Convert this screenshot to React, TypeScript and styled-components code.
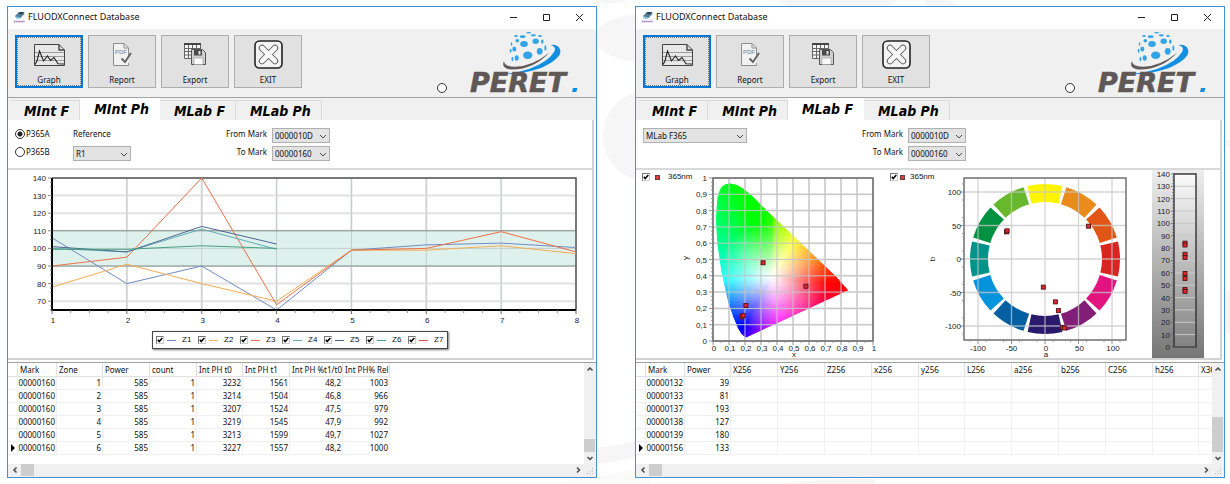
import React, { useId, useState } from "react";
import styled, { createGlobalStyle } from "styled-components";

const ui = `"Noto Sans", "Open Sans", sans-serif`;
const plotFont = `"Liberation Sans", Arial, sans-serif`;

const GlobalStyle = createGlobalStyle`
  *, *::before, *::after { box-sizing: border-box; }
  body {
    margin: 0;
    background: #fff;
    color: #111;
    font-family: ${ui};
    font-size: 8px;
    line-height: 12px;
  }
  button, select, input { font: inherit; color: inherit; margin: 0; }
  svg { display: block; }
`;

/* ---------- Page ---------- */

const Page = styled.main`
  position: relative;
  display: flex;
  align-items: flex-start;
  gap: 38px;
  min-height: 100vh;
  padding: 6px 5px 6px 7px;
  overflow: hidden;
`;

const Backdrop = styled.svg`
  position: absolute;
  inset: 0;
`;

const Frame = styled.section`
  position: relative;
  flex: 1;
  min-width: 0;
  border: 1px solid #3f92d6;
  background: #fff;
`;

/* ---------- Title bar ---------- */

const TitleBar = styled.header`
  display: flex;
  align-items: center;
  height: 22px;
  padding: 0 0 2px 6px;
  gap: 3px;
`;

const Title = styled.h1`
  flex: 1;
  margin: 0;
  font-size: 9px;
  font-weight: 400;
`;

const CaptionButtons = styled.div`
  display: flex;
`;

const CaptionButton = styled.button`
  display: grid;
  place-items: center;
  width: 33px;
  height: 20px;
  padding: 0;
  border: 0;
  background: none;
`;

/* ---------- Toolbar ---------- */

const Toolbar = styled.div`
  display: flex;
  height: 69px;
  padding: 6px 13px 0 7px;
  gap: 5px;
  background: #f0f0f0;
  border-bottom: 1px solid #a3a3a3;
`;

const ToolButton = styled.button<{ $focused?: boolean }>`
  display: flex;
  flex-direction: column;
  align-items: center;
  width: 68px;
  height: 53px;
  padding: 0;
  border: ${(p) => (p.$focused ? "2px solid #0078d7" : "1px solid #adadad")};
  outline: ${(p) => (p.$focused ? "1px dotted #777" : "none")};
  outline-offset: -3px;
  background: #e1e1e1;
`;

const ToolIcon = styled.span<{ $focused?: boolean }>`
  display: grid;
  place-items: center;
  height: ${(p) => (p.$focused ? "37px" : "38px")};
  padding-bottom: 2px;
`;

const Brand = styled.div`
  display: flex;
  align-items: flex-end;
  gap: 18px;
  height: 58px;
  margin-left: auto;
`;

/* ---------- Tabs ---------- */

const TabStrip = styled.div`
  display: flex;
  align-items: flex-end;
  height: 22px;
  padding-left: 2px;
  background: #f0f0f0;
`;

const Tab = styled.button<{ $active: boolean }>`
  height: ${(p) => (p.$active ? "22px" : "20px")};
  padding: 0 10px ${(p) => (p.$active ? "2px" : "0")} 14px;
  border: 1px solid ${(p) => (p.$active ? "#fff" : "#dcdcdc")};
  border-left-width: 0;
  border-bottom-width: 0;
  background: ${(p) => (p.$active ? "#fff" : "#f0f0f0")};
  color: #000;
  font: italic 700 14px/18px "DejaVu Sans Condensed", "DejaVu Sans", sans-serif;
  white-space: nowrap;
`;

const Body = styled.div`
  margin-right: 2px;
  border: solid #d2d2d2;
  border-width: 0 2px 2px 0;
`;

/* ---------- Filter controls ---------- */

const Filters = styled.form`
  display: flex;
  height: 50px;
  padding: 8px 7px 0;
  border-bottom: 2px solid #d9d9d9;
`;

const Stack = styled.div<{ $width: number }>`
  display: grid;
  grid-template-rows: 15px 15px;
  row-gap: 3px;
  width: ${(p) => p.$width}px;
`;

const RadioLabel = styled.label`
  display: flex;
  align-items: center;
  gap: 1px;
  height: 12px;
`;

const Radio = styled.input.attrs({ type: "radio" })`
  appearance: none;
  width: 10px;
  height: 10px;
  border: 1px solid #333;
  border-radius: 50%;
  background: #fff;
  &:checked {
    background: radial-gradient(circle, #222 0 2px, #fff 3px);
  }
`;

const FieldLabel = styled.label`
  line-height: 11px;
  white-space: nowrap;
`;

const MarkGrid = styled.div<{ $offset: number }>`
  display: grid;
  grid-template: 15px 15px / 46px 58px;
  gap: 3px 5px;
  margin-left: ${(p) => p.$offset}px;
  ${FieldLabel} { text-align: right; }
`;

const SelectBox = styled.span`
  display: grid;
  align-items: center;
  height: 15px;
  > * { grid-area: 1 / 1; }
  > svg { justify-self: end; margin-right: 3px; pointer-events: none; }
`;

const NativeSelect = styled.select`
  appearance: none;
  width: 100%;
  height: 15px;
  padding: 0 0 0 2px;
  border: 1px solid #b0b0b0;
  border-radius: 0;
  background: #e3e3e3;
  line-height: 12px;
`;

/* ---------- Charts ---------- */

const Charts = styled.div`
  display: flex;
  align-items: flex-start;
  padding-right: 16px;
`;

const LineChartBox = styled.figure`
  display: flex;
  flex-direction: column;
  align-items: center;
  margin: 0;
  padding-bottom: 9px;
`;

const Plot = styled.svg`
  width: 100%;
  height: auto;
  font-family: ${plotFont};
  font-size: 8px;
  fill: #222;
`;

const Legend = styled.figcaption`
  display: flex;
  height: 18px;
  border: 1px solid #444;
  background: #fff;
  box-shadow: 1px 1px 2px #777;
  font-family: ${plotFont};
`;

const LegendItem = styled.label`
  display: flex;
  align-items: center;
  width: 42px;
  padding-left: 3px;
`;

const Dash = styled.i<{ $color: string }>`
  width: 9px;
  height: 1px;
  margin: 0 6px 0 3px;
  background: ${(p) => p.$color};
`;

const CheckBoxFrame = styled.span`
  display: grid;
  place-items: center;
  > * { grid-area: 1 / 1; }
  > svg { pointer-events: none; }
  > input:not(:checked) + svg { visibility: hidden; }
`;

const CheckInput = styled.input.attrs({ type: "checkbox" })`
  appearance: none;
  width: 8px;
  height: 8px;
  border: 1px solid;
  border-color: #777 #ccc #ccc #777;
  background: #fff;
`;

const Panel = styled.div<{ $grow: number }>`
  display: grid;
  flex: ${(p) => p.$grow} 1 0;
  min-width: 0;
  > * { grid-area: 1 / 1; }
`;

const PointLegend = styled.label<{ $indent: number; $gap: number }>`
  display: flex;
  align-items: center;
  align-self: start;
  justify-self: start;
  gap: ${(p) => p.$gap}px;
  padding: 1px 0 0 ${(p) => p.$indent}px;
  font-family: ${plotFont};
`;

const PointSwatch = styled.i`
  width: 5px;
  height: 5px;
  margin-right: 3px;
  border: 1px solid #6b3a3a;
  background: #e23b3b;
`;

/* ---------- Data grid ---------- */

const GridFrame = styled.div`
  display: grid;
  grid-template: 101px 12px / 1fr 11px;
  margin-top: 2px;
  padding: 0 1px 1px 0;
  border-top: 1px solid #a0a0a0;
  background: #f0f0f0;
`;

const GridView = styled.div`
  overflow: hidden;
  background: #fff;
`;

const Table = styled.table`
  table-layout: fixed;
  width: 0;
  border-collapse: separate;
  border-spacing: 0;
`;

const HeadCell = styled.th`
  height: 14px;
  padding: 0 0 0 2px;
  border-right: 1px solid #e2e2e2;
  border-bottom: 1px solid #e2e2e2;
  font-weight: 400;
  text-align: left;
  line-height: 12px;
  white-space: nowrap;
`;

const Cell = styled.td`
  height: 13px;
  padding: 0 1px 0 0;
  border-right: 1px solid #f0f0f0;
  border-bottom: 1px solid #f0f0f0;
  text-align: right;
  line-height: 12px;
`;

const Pointer = styled.i`
  display: block;
  width: 0;
  margin-left: 3px;
  border: solid transparent;
  border-width: 4px 0 4px 4px;
  border-left-color: #000;
`;

const VScroll = styled.div`
  display: flex;
  flex-direction: column;
`;

const HScroll = styled.div`
  display: flex;
`;

const Track = styled.span`
  flex: 1;
`;

const Thumb = styled.span<{ $length: number; $across?: boolean }>`
  width: ${(p) => (p.$across ? `${p.$length}px` : "auto")};
  height: ${(p) => (p.$across ? "auto" : `${p.$length}px`)};
  background: #cdcdcd;
`;

const ScrollButton = styled.button`
  display: grid;
  place-items: center;
  min-width: 11px;
  width: 13px;
  height: 12px;
  padding: 0;
  border: 0;
  background: none;
  ${VScroll} & { width: 11px; }
`;

const Grip = styled.svg`
  align-self: end;
  justify-self: end;
`;

/* ---------- Small drawings ---------- */

const Chevron = ({ dir, bold }: { dir: "up" | "down" | "left" | "right"; bold?: boolean }) => {
  const d = bold
    ? { up: "M1.500 5.500L4 3l2.500 2.500", down: "M1.500 3L4 5.500 6.500 3", left: "M5.500 1.500L3 4l2.500 2.500", right: "M3 1.500L5.500 4 3 6.500" }[dir]
    : { up: "M1 6l3-3 3 3", down: "M1 3l3 3 3-3", left: "M6 1L3 4l3 3", right: "M3 1l3 3-3 3" }[dir];
  return (
    <svg width="8" height="8" viewBox="0 0 8 8" fill="none" stroke="#4a4a4a" strokeWidth={bold ? 1.5 : 1} aria-hidden="true">
      <path d={d} />
    </svg>
  );
};

const AppIcon = () => (
  <svg width="11" height="12" viewBox="0 0 11 12" aria-hidden="true">
    <path d="M1 5l4-4 5 0 .5 2-4 4-4 .5z" fill="#5b7f99" />
    <path d="M4 2l3-1 3 .5-3 2z" fill="#263d52" />
    <path d="M1 5.500l4 .5 1 1.500-3 .5z" fill="#7fd0ec" />
    <path d="M0 10.500h11" stroke="#a06bb8" strokeWidth="1.500" strokeDasharray="1.500 .6" />
  </svg>
);

const GraphIcon = () => (
  <svg width="31" height="22" viewBox="0 0 31 22" fill="none" stroke="#444" aria-hidden="true">
    <path d="M.5.500H25l5.500 5.500v15.500H.5z" fill="#e8e8e8" />
    <path d="M25 .5V6h5.500" strokeWidth="1.400" />
    <path d="M1 8.500h29M1 12.500h29M1 16.500h29" stroke="#8a8a8a" strokeWidth=".8" />
    <path d="M1 20.500L3 17 5.500 7l4 10 4-5 3 4.500 3.500-3 4 6.200 6 .3" stroke="#222" strokeWidth="1.100" />
  </svg>
);

const ReportIcon = () => (
  <svg width="19" height="23" viewBox="0 0 19 23" fill="none" stroke="#8d8d8d" aria-hidden="true">
    <path d="M.5.500H11l4.500 4.500v17.500H.5z" fill="#f2f2f2" stroke="none" />
    <path d="M15.500 12V5L11 .5H.5v22h15V20M11 .5V5h4.500" />
    <text x="2" y="11" fontSize="6" fontFamily={plotFont} fill="#777" stroke="none">PDF</text>
    <path d="M8.500 15.500l3.500 3.500 6-9" stroke="#666" strokeWidth="2" />
  </svg>
);

const ExportIcon = () => (
  <svg width="22" height="22" viewBox="0 0 22 22" aria-hidden="true">
    <path d="M.5.500h16v15H.5z" fill="#f4f4f4" stroke="#666" />
    <path d="M0 0h17v2H0z" fill="#444" />
    <path d="M4.500 2v13.500M8.500 2v13.500M12.500 2v13.500M.5 5.500h16M.5 8.500h16M.5 12h16" stroke="#666" />
    <path d="M7.500 6.500h11l3 3v12h-14z" fill="#cfcfcf" stroke="#555" />
    <path d="M10 7h8v5.500h-8z" fill="#4a4a4a" />
    <path d="M14.500 8h2v3.500h-2z" fill="#e1e1e1" />
    <path d="M10 15h9v6.500h-9z" fill="#fafafa" stroke="#999" strokeWidth=".6" />
  </svg>
);

const ExitIcon = () => (
  <svg width="29" height="29" viewBox="0 0 29 29" aria-hidden="true">
    <rect x="1" y="1" width="27" height="27" rx="4.500" fill="#f3f3f3" stroke="#222" strokeWidth="1.600" />
    <path d="M8 8l13 13M21 8L8 21" stroke="#555" strokeWidth="6.400" strokeLinecap="round" />
    <path d="M8 8l13 13M21 8L8 21" stroke="#f8f8f8" strokeWidth="4.600" strokeLinecap="round" />
  </svg>
);

const globeDots = [
  [59, 13, 3.8, 3], [70.7, 10.3, 3.2, 2.7], [62.7, 24.3, 4.6, 3.8], [74.7, 20.3, 2.9, 3.4],
  [49.3, 18, 2, 2.6], [51.7, 27, 2, 2.8], [57.7, 5.7, 3, 1.4], [68.3, 4.3, 2.6, 1.1],
  [63.7, 1.7, 2.6, 0.8], [52.3, 9.7, 1.8, 1.8], [77.3, 10.6, 1.2, 2.2], [80.4, 17, 1, 2.8],
  [47.4, 28, 0.9, 2.2], [45.6, 19.7, 0.9, 2], [75, 5, 1.8, 0.9], [51, 5, 1.8, 0.9], [46.5, 13, 0.8, 1.8],
];

const LogoArt = styled.svg`
  overflow: visible;
`;

const Logo = () => (
  <LogoArt width="118" height="62" viewBox="0 0 118 62" role="img" aria-label="Peret">
    {globeDots.map(([cx, cy, rx, ry], i) => (
      <ellipse key={i} cx={cx} cy={cy} rx={rx} ry={ry} fill="#31a3e6" />
    ))}
    <path d="M39 30Q35.500 37.500 46 38.500 68 39 84.500 21.500 67 35.500 50 35.800 39 35.500 39 30z" fill="#625b5a" />
    <path d="M39 43Q55 44 76 37 98 27 95 18.500 93 13 85.500 14 92 16 89 21 83 31 64 38 52 42 39 43z" fill="#128fe0" />
    <text
      x="5"
      y="61"
      fontFamily={`"DejaVu Sans", sans-serif`}
      fontSize="27"
      fontWeight="700"
      fontStyle="italic"
      fill="#5f5856"
      stroke="#5f5856"
      strokeWidth=".6"
    >
      PERET
    </text>
    <path d="M108 57h4.500l-1.200 4H107z" fill="#128fe0" />
  </LogoArt>
);

/* ---------- Shared controls ---------- */

const CheckBox = ({ label }: { label?: string }) => {
  const [on, setOn] = useState(true);
  return (
    <CheckBoxFrame>
      <CheckInput checked={on} onChange={() => setOn(!on)} aria-label={label} />
      <svg width="6" height="6" viewBox="0 0 6 6" fill="none" stroke="#000" strokeWidth="1.500" aria-hidden="true">
        <path d="M.8 2.800l1.400 1.700L5.300 1" />
      </svg>
    </CheckBoxFrame>
  );
};

const Select = ({ id, value, label }: { id: string; value: string; label?: string }) => (
  <SelectBox>
    <NativeSelect id={id} defaultValue={value} aria-label={label}>
      <option>{value}</option>
    </NativeSelect>
    <Chevron dir="down" />
  </SelectBox>
);

const MarkRange = ({ offset }: { offset: number }) => {
  const id = useId();
  return (
    <MarkGrid $offset={offset}>
      <FieldLabel htmlFor={`${id}from`}>From Mark</FieldLabel>
      <Select id={`${id}from`} value="0000010D" />
      <FieldLabel htmlFor={`${id}to`}>To Mark</FieldLabel>
      <Select id={`${id}to`} value="00000160" />
    </MarkGrid>
  );
};

/* ---------- Line chart ---------- */

const series: { name: string; color: string; values: number[] }[] = [
  { name: "Z1", color: "#6f8cc4", values: [106, 80, 90, 65, 99, 102, 103, 100.5] },
  { name: "Z2", color: "#f3ad52", values: [78, 91, 80, 70, 99, 99, 101.5, 97] },
  { name: "Z3", color: "#ee7048", values: [90, 95, 140, 68, 99, 100, 109.5, 98] },
  { name: "Z4", color: "#62abb5", values: [100, 98, 111, 99.5] },
  { name: "Z5", color: "#4f6690", values: [101, 98, 112.5, 102.5] },
  { name: "Z6", color: "#45a07f", values: [99.5, 99.5, 101.5, 100] },
  { name: "Z7", color: "#e05050", values: [] },
];

const LineChart = () => {
  const left = 44;
  const right = 568;
  const top = 8;
  const bottom = 140;
  const sx = (i: number) => left + ((i - 1) * (right - left)) / 7;
  const sy = (v: number) => bottom - ((v - 65) * (bottom - top)) / 75;
  const levels = [70, 80, 90, 100, 110, 120, 130, 140];
  const steps = [1, 2, 3, 4, 5, 6, 7, 8];
  return (
    <LineChartBox>
      <Plot viewBox="0 0 584 161" role="img" aria-label="Zones by measurement">
        <g stroke="#e2e2e2" strokeWidth="2">
          {levels.map((v) => <path key={v} d={`M${left} ${sy(v)}H${right}`} />)}
          {steps.map((i) => <path key={i} d={`M${sx(i)} ${top}V${bottom}`} />)}
        </g>
        <rect x={left} y={sy(110)} width={right - left} height={sy(90) - sy(110)} fill="#dff1ec" />
        <g stroke="#c4cfcc">
          {steps.slice(1, 7).map((i) => <path key={i} d={`M${sx(i)} ${top}V${bottom}`} />)}
          <path d={`M${left} ${sy(100)}H${right}`} />
        </g>
        <path d={`M${left} ${sy(110)}H${right}M${left} ${sy(90)}H${right}`} stroke="#7f8a88" />
        <path d={`M${left} ${top}H${right}V${bottom}`} fill="none" stroke="#555" strokeWidth="1.500" />
        {series.map((s) => (
          <polyline
            key={s.name}
            points={s.values.map((v, i) => `${sx(i + 1)},${sy(v)}`).join(" ")}
            fill="none"
            stroke={s.color}
          />
        ))}
        <path d={`M${left} ${top}V${bottom}H${right}`} fill="none" stroke="#000" strokeWidth="2" />
        {levels.map((v) => (
          <g key={v}>
            <path d={`M${left - 4} ${sy(v)}h4M${left - 2} ${sy(v - 2.5)}h2M${left - 2} ${sy(v - 5)}h2`} stroke="#666" strokeWidth=".8" />
            <text x={left - 6} y={sy(v) + 3} textAnchor="end">{v}</text>
          </g>
        ))}
        {steps.map((i) => (
          <g key={i}>
            <path d={`M${sx(i)} ${bottom}v4`} stroke="#666" />
            {i < 8 && (
              <path d={`M${sx(i + 0.25)} ${bottom}v3M${sx(i + 0.5)} ${bottom}v3M${sx(i + 0.75)} ${bottom}v3`} stroke="#777" strokeWidth=".8" />
            )}
            <text x={sx(i) + 1} y={bottom + 13} textAnchor="middle">{i}</text>
          </g>
        ))}
      </Plot>
      <Legend>
        {series.map((s) => (
          <LegendItem key={s.name}>
            <CheckBox />
            <Dash $color={s.color} />
            {s.name}
          </LegendItem>
        ))}
      </Legend>
    </LineChartBox>
  );
};

/* ---------- Colour charts ---------- */

const Marker = ({ x, y }: { x: number; y: number }) => (
  <rect x={x - 2} y={y - 2} width="4" height="4" fill="#e0262c" stroke="#4c1517" strokeWidth=".9" />
);

const hueStops: [number, number[]][] = [
  [0, [40, 255, 0]], [4, [128, 255, 0]], [32, [255, 255, 0]], [63, [255, 140, 0]],
  [97, [255, 0, 0]], [131, [255, 0, 128]], [172, [255, 0, 255]], [195, [128, 0, 255]],
  [211, [0, 0, 255]], [242, [0, 128, 255]], [268, [0, 255, 255]], [310, [0, 255, 128]],
  [340, [0, 255, 10]], [350, [0, 255, 0]], [360, [40, 255, 0]],
];

const hueAt = (deg: number) => {
  const i = Math.max(1, hueStops.findIndex(([a]) => a >= deg));
  const [a0, c0] = hueStops[i - 1];
  const [a1, c1] = hueStops[i];
  const t = (deg - a0) / (a1 - a0);
  return `rgb(${c0.map((c, k) => Math.round(c + (c1[k] - c) * t)).join(",")})`;
};

const locus = [
  [0.106, 0.966], [0.075, 0.96], [0.054, 0.945], [0.038, 0.915], [0.027, 0.87], [0.019, 0.752],
  [0.027, 0.598], [0.054, 0.422], [0.096, 0.238], [0.128, 0.145], [0.158, 0.075], [0.18, 0.042],
  [0.206, 0.021], [0.844, 0.312], [0.773, 0.391], [0.314, 0.821], [0.25, 0.885], [0.188, 0.934], [0.15, 0.957],
];

const Chromaticity = () => {
  const sx = (v: number) => 77 + 160 * v;
  const sy = (v: number) => 171 - 163 * v;
  const cx = sx(0.367);
  const cy = sy(0.391);
  const ticks = Array.from({ length: 11 }, (_, i) => i / 10);
  const label = (v: number) => String(v).replace(".", ",");
  const point = (deg: number) => {
    const r = (deg * Math.PI) / 180;
    return `${cx + 180 * Math.sin(r)} ${cy - 180 * Math.cos(r)}`;
  };
  return (
    <Panel $grow={245}>
      <Plot viewBox="0 0 245 188" role="img" aria-label="Chromaticity diagram">
        <defs>
          <clipPath id="locus">
            <polygon points={locus.map(([x, y]) => `${sx(x)},${sy(y)}`).join(" ")} />
          </clipPath>
          <radialGradient id="whitePoint" gradientUnits="userSpaceOnUse" cx={cx} cy={cy} r="56">
            <stop offset="0" stopColor="#fff" />
            <stop offset=".4" stopColor="#fff" stopOpacity=".6" />
            <stop offset="1" stopColor="#fff" stopOpacity="0" />
          </radialGradient>
        </defs>
        <g stroke="#e4e4e4" strokeWidth="2">
          {ticks.map((v) => <path key={v} d={`M${sx(v)} ${sy(0)}V${sy(1)}M${sx(0)} ${sy(v)}H${sx(1)}`} />)}
        </g>
        <g clipPath="url(#locus)">
          {Array.from({ length: 180 }, (_, i) => (
            <path key={i} d={`M${cx} ${cy}L${point(i * 2 - 0.5)}L${point(i * 2 + 2.5)}z`} fill={hueAt(i * 2 + 1)} />
          ))}
          <rect x={cx - 60} y={cy - 60} width="120" height="120" fill="url(#whitePoint)" />
        </g>
        <g stroke="#c4c4c4">
          {ticks.map((v) => <path key={v} d={`M${sx(v)} ${sy(0)}V${sy(1)}M${sx(0)} ${sy(v)}H${sx(1)}`} />)}
        </g>
        <rect x={sx(0)} y={sy(1)} width="160" height="163" fill="none" stroke="#666" strokeWidth="1.400" />
        {ticks.map((v) => (
          <g key={v}>
            <path d={`M${sx(0) - 4} ${sy(v)}h4M${sx(v)} ${sy(0)}v4`} stroke="#777" strokeWidth=".8" />
            {v < 1 && (
              <path d={`M${sx(0) - 2} ${sy(v + 0.025)}h2m-2 -4h2m-2 -4h2M${sx(v + 0.05)} ${sy(0)}v2`} stroke="#888" strokeWidth=".8" />
            )}
            <text x={sx(0) - 6} y={sy(v) + 3} textAnchor="end">{label(v)}</text>
            <text x={sx(v) + 1} y={sy(0) + 10} textAnchor="middle">{label(v)}</text>
          </g>
        ))}
        <text x={sx(0.5) + 1} y="187" textAnchor="middle">x</text>
        <text textAnchor="middle" transform="translate(52 88) rotate(-90)">y</text>
        {[[0.313, 0.48], [0.581, 0.336], [0.206, 0.218], [0.181, 0.148], [0.189, 0.157]].map(([x, y]) => (
          <Marker key={x} x={sx(x)} y={sy(y)} />
        ))}
      </Plot>
      <PointLegend $indent={6} $gap={5}>
        <CheckBox />
        <PointSwatch />
        365nm
      </PointLegend>
    </Panel>
  );
};

const wheelColors = [
  "#fff500", "#ea8b1c", "#e15616", "#da241f", "#e2137f", "#821e77",
  "#2a1a6e", "#055fa3", "#0593de", "#04938a", "#009241", "#68b82d",
];

const wheelPoints = [
  [-57.5, 40.5], [-56.5, 42], [65, 49], [-2.5, -42], [15.5, -64], [20, -77], [26, -102], [29, -103],
];

const ColorWheel = () => {
  const cx = 164;
  const cy = 89;
  const unit = 0.67;
  const sx = (v: number) => cx + v * unit;
  const sy = (v: number) => cy - v * unit;
  const ticks = [-100, -50, 0, 50, 100];
  const at = (deg: number, r: number) => {
    const a = (deg * Math.PI) / 180;
    return `${cx + r * Math.sin(a)} ${cy - r * Math.cos(a)}`;
  };
  return (
    <Panel $grow={271}>
      <Plot viewBox="0 0 271 188" role="img" aria-label="Lab a b diagram">
        {wheelColors.map((c, i) => (
          <path
            key={c}
            d={`M${at(i * 30 - 13.4, 75)}A75 75 0 0 1 ${at(i * 30 + 13.4, 75)}L${at(i * 30 + 13.8, 57)}A57 57 0 0 0 ${at(i * 30 - 13.8, 57)}z`}
            fill={c}
          />
        ))}
        <g stroke="#c6c6c6" strokeOpacity=".75" strokeWidth="1.300">
          {ticks.map((v) => <path key={v} d={`M${sx(v)} 8V170M83 ${sy(v)}H245`} />)}
        </g>
        <rect x="83" y="8" width="162" height="162" fill="none" stroke="#666" strokeWidth="1.400" />
        {ticks.map((v) => (
          <g key={v}>
            <path d={`M79 ${sy(v)}h4M${sx(v)} 170v4`} stroke="#777" strokeWidth=".8" />
            <path d={`M81 ${sy(v - 12)}h2M81 ${sy(v + 12)}h2M${sx(v - 12)} 170v2M${sx(v + 12)} 170v2`} stroke="#888" strokeWidth=".8" />
            <text x="80" y={sy(v) + 3} textAnchor="end">{v}</text>
            <text x={sx(v) + (v < 0 ? 0 : 1)} y="181" textAnchor="middle">{v}</text>
          </g>
        ))}
        <text x="165" y="187" textAnchor="middle">a</text>
        <text textAnchor="middle" transform="translate(54 89) rotate(-90)">b</text>
        {wheelPoints.map(([a, b]) => <Marker key={a} x={sx(a)} y={sy(b)} />)}
      </Plot>
      <PointLegend $indent={9} $gap={2}>
        <CheckBox />
        <PointSwatch />
        365nm
      </PointLegend>
    </Panel>
  );
};

const LightnessScale = () => {
  const sy = (v: number) => 177 - v * 1.236;
  return (
    <Panel $grow={52}>
      <Plot viewBox="0 0 52 188" role="img" aria-label="Lightness scale">
        <defs>
          <linearGradient id="scaleBack" x2="0" y2="1">
            <stop offset="0" stopColor="#eeeeee" />
            <stop offset="1" stopColor="#767676" />
          </linearGradient>
          <linearGradient id="scaleTube" x2="0" y2="1">
            <stop offset="0" stopColor="#fbfbfb" />
            <stop offset="1" stopColor="#828282" />
          </linearGradient>
        </defs>
        <rect width="52" height="188" fill="url(#scaleBack)" />
        <rect x="22" y={sy(140)} width="22" height={sy(0) - sy(140)} fill="url(#scaleTube)" />
        {Array.from({ length: 15 }, (_, i) => i * 10).map((v) => (
          <g key={v}>
            <path d={`M22 ${sy(v)}h22`} stroke="#c9c9c9" />
            <path d={`M19 ${sy(v)}h3`} stroke="#666" strokeWidth=".8" />
            {v < 140 && <path d={`M20 ${sy(v + 2.5)}h2M20 ${sy(v + 5)}h2M20 ${sy(v + 7.5)}h2`} stroke="#777" strokeWidth=".7" />}
            <text x="18" y={sy(v) + 3} textAnchor="end">{v}</text>
          </g>
        ))}
        <rect x="22" y={sy(140)} width="22" height={sy(0) - sy(140)} fill="none" stroke="#333" strokeWidth="1.400" />
        {[84, 82.5, 75, 72.5, 59.5, 55.5, 46.5, 45].map((v) => <Marker key={v} x={33} y={sy(v)} />)}
      </Plot>
    </Panel>
  );
};

/* ---------- Data grid ---------- */

type Column = { title: string; width: number };

const DataGrid = ({ columns, rows, thumb }: { columns: Column[]; rows: string[][]; thumb: number }) => (
  <GridFrame>
    <GridView>
      <Table>
        <colgroup>
          <col width={10} />
          {columns.map((c) => <col key={c.title} width={c.width} />)}
        </colgroup>
        <thead>
          <tr>
            <HeadCell aria-label="Current row" />
            {columns.map((c) => <HeadCell key={c.title} scope="col">{c.title}</HeadCell>)}
          </tr>
        </thead>
        <tbody>
          {rows.map((row, r) => (
            <tr key={r}>
              <Cell>{r === rows.length - 1 && <Pointer />}</Cell>
              {columns.map((c, i) => <Cell key={c.title}>{row[i]}</Cell>)}
            </tr>
          ))}
        </tbody>
      </Table>
    </GridView>
    <VScroll>
      <ScrollButton type="button" aria-label="Scroll up"><Chevron dir="up" bold /></ScrollButton>
      <Track />
      <Thumb $length={thumb} />
      <ScrollButton type="button" aria-label="Scroll down"><Chevron dir="down" bold /></ScrollButton>
    </VScroll>
    <HScroll>
      <ScrollButton type="button" aria-label="Scroll left"><Chevron dir="left" bold /></ScrollButton>
      <Thumb $length={13} $across />
      <Track />
      <ScrollButton type="button" aria-label="Scroll right"><Chevron dir="right" bold /></ScrollButton>
    </HScroll>
    <Grip width="8" height="8" viewBox="0 0 8 8" fill="#b5b5b5" aria-hidden="true">
      <path d="M5 0h1v1H5zM5 2.500h1v1H5zM5 5h1v1H5zM2.500 2.500h1v1h-1zM2.500 5h1v1h-1zM0 5h1v1H0z" />
    </Grip>
  </GridFrame>
);

const intensityColumns: Column[] = [
  { title: "Mark", width: 39 },
  { title: "Zone", width: 46 },
  { title: "Power", width: 47 },
  { title: "count", width: 47 },
  { title: "Int PH t0", width: 46 },
  { title: "Int PH t1", width: 47 },
  { title: "Int PH %t1/t0", width: 53 },
  { title: "Int PH% Rel", width: 47 },
];

const intensityRows = [
  ["00000160", "1", "585", "1", "3232", "1561", "48,2", "1003"],
  ["00000160", "2", "585", "1", "3214", "1504", "46,8", "966"],
  ["00000160", "3", "585", "1", "3207", "1524", "47,5", "979"],
  ["00000160", "4", "585", "1", "3219", "1545", "47,9", "992"],
  ["00000160", "5", "585", "1", "3213", "1599", "49,7", "1027"],
  ["00000160", "6", "585", "1", "3227", "1557", "48,2", "1000"],
];

const labColumns: Column[] = [
  { title: "Mark", width: 39 },
  { title: "Power", width: 46 },
  ...["X256", "Y256", "Z256", "x256", "y256", "L256", "a256", "b256", "C256", "h256", "X365"].map((title) => ({
    title,
    width: title === "y256" || title === "h256" ? 46 : 47,
  })),
];

const labRows = [
  ["00000132", "39"],
  ["00000133", "81"],
  ["00000137", "193"],
  ["00000138", "127"],
  ["00000139", "180"],
  ["00000156", "133"],
];

/* ---------- Window ---------- */

const tools = [
  { name: "Graph", icon: <GraphIcon /> },
  { name: "Report", icon: <ReportIcon /> },
  { name: "Export", icon: <ExportIcon /> },
  { name: "EXIT", icon: <ExitIcon /> },
];

const tabs = ["MInt F", "MInt Ph", "MLab F", "MLab Ph"];

const AppWindow = ({ active, children, grid }: { active: string; children: React.ReactNode; grid: React.ReactNode }) => (
  <Frame>
    <TitleBar>
      <AppIcon />
      <Title>FLUODXConnect Database</Title>
      <CaptionButtons>
        <CaptionButton type="button" aria-label="Minimize">
          <svg width="9" height="9" stroke="#222"><path d="M1 4.500h7" /></svg>
        </CaptionButton>
        <CaptionButton type="button" aria-label="Maximize">
          <svg width="9" height="9" fill="none" stroke="#222"><path d="M1.500 1.500h6v6h-6z" /></svg>
        </CaptionButton>
        <CaptionButton type="button" aria-label="Close">
          <svg width="9" height="9" stroke="#222"><path d="M1 1l7 7M8 1L1 8" /></svg>
        </CaptionButton>
      </CaptionButtons>
    </TitleBar>
    <Toolbar>
      {tools.map((t, i) => (
        <ToolButton key={t.name} type="button" $focused={i === 0}>
          <ToolIcon $focused={i === 0}>{t.icon}</ToolIcon>
          {t.name}
        </ToolButton>
      ))}
      <Brand>
        <Radio name={`status-${active}`} aria-label="Status" />
        <Logo />
      </Brand>
    </Toolbar>
    <TabStrip role="tablist">
      {tabs.map((t) => (
        <Tab key={t} type="button" role="tab" aria-selected={t === active} $active={t === active}>
          {t}
        </Tab>
      ))}
    </TabStrip>
    <Body>{children}</Body>
    {grid}
  </Frame>
);

export default function App() {
  return (
    <>
      <GlobalStyle />
      <Page>
        <Backdrop width="100%" height="100%" fill="#f6f6f6" aria-hidden="true">
          <ellipse cx="612" cy="-3" rx="18" ry="6" />
          <ellipse cx="645" cy="38" rx="50" ry="24" />
          <ellipse cx="650" cy="136" rx="47" ry="46" />
          <path d="M540 484q50-2 110-20v20z" fill="#fbfbfb" />
          <path d="M590 449q24-3 50-9v16q-24 6-50 9z" />
          <path d="M778 0h120l-8 6h-104zM923 0h24l12 6h-32z" />
          <path d="M775 484q40-5 100-5v5z" />
          <circle cx="1246" cy="312" r="28" />
          <path d="M1222 140h8v7h-8z" />
        </Backdrop>
        <AppWindow
          active="MInt Ph"
          grid={<DataGrid columns={intensityColumns} rows={intensityRows} thumb={13} />}
        >
          <Filters>
            <Stack $width={58}>
              <RadioLabel><Radio name="probe" defaultChecked />P365A</RadioLabel>
              <RadioLabel><Radio name="probe" />P365B</RadioLabel>
            </Stack>
            <Stack $width={58}>
              <FieldLabel htmlFor="reference">Reference</FieldLabel>
              <Select id="reference" value="R1" />
            </Stack>
            <MarkRange offset={90} />
          </Filters>
          <LineChart />
        </AppWindow>
        <AppWindow
          active="MLab F"
          grid={<DataGrid columns={labColumns} rows={labRows} thumb={35} />}
        >
          <Filters>
            <Stack $width={104}>
              <Select id="method" value="MLab F365" label="Method" />
            </Stack>
            <MarkRange offset={110} />
          </Filters>
          <Charts>
            <Chromaticity />
            <ColorWheel />
            <LightnessScale />
          </Charts>
        </AppWindow>
      </Page>
    </>
  );
}
